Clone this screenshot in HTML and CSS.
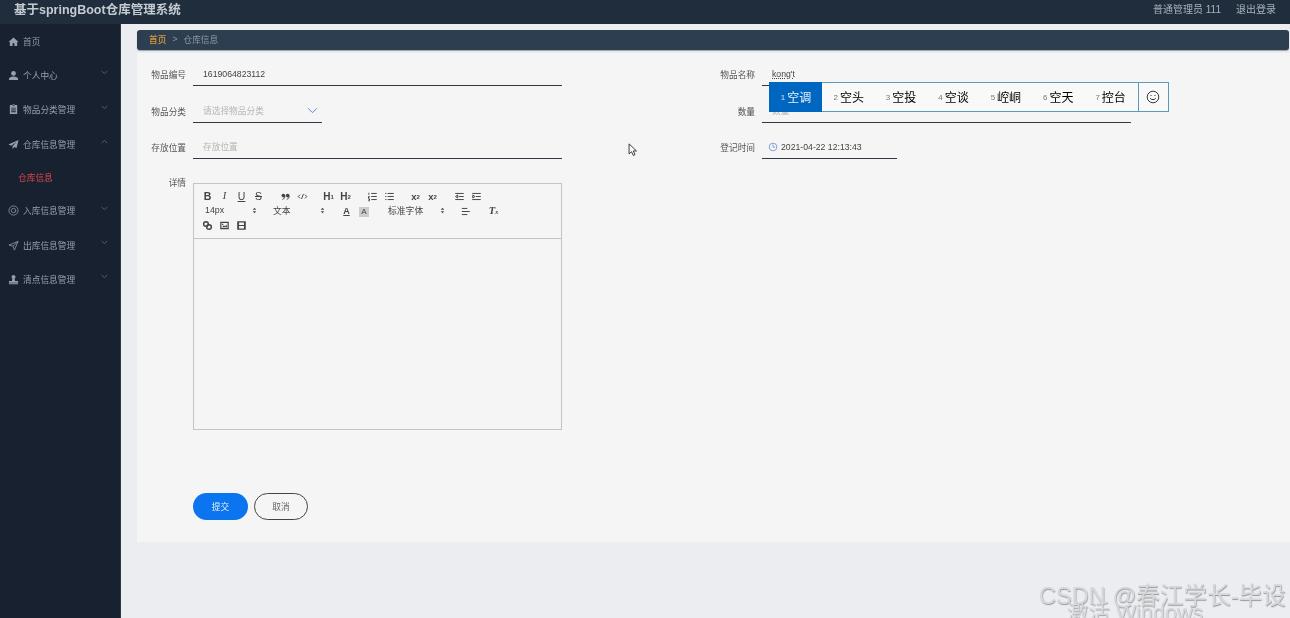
FILE: index.html
```html
<!DOCTYPE html>
<html lang="zh">
<head>
<meta charset="utf-8">
<title>基于springBoot仓库管理系统</title>
<link rel="stylesheet" href="styles.css">
</head>
<body>
<div class="app">
  <header class="topbar">
    <div class="brand">基于springBoot仓库管理系统</div>
    <div class="top-right"><span>普通管理员 111</span><span>退出登录</span></div>
  </header>
  <div class="body-row">
    <aside class="sidebar">
      <div class="nav-item"><svg class="nav-icon" viewBox="0 0 12 12"><path d="M6 1.500 .8 6.200l.6.6L2 6.400V11h3V7.800h2V11h3V6.400l.6.4.6-.6z"/></svg><span>首页</span></div>
      <div class="nav-item"><svg class="nav-icon" viewBox="0 0 12 12"><circle cx="6" cy="3.800" r="2.600"/><path d="M1 10c0-2 2-3 5-3s5 1 5 3v.8H1z"/></svg><span>个人中心</span><svg class="chev" viewBox="0 0 10 6"><path d="M1 1l4 3.500L9 1"/></svg></div>
      <div class="nav-item"><svg class="nav-icon" viewBox="0 0 12 12"><path fill-rule="evenodd" d="M2 1h8v10H2zM5 .2h2V2H5zM3.500 4v1h5V4zm0 2v1h5V6zm0 2v1h5V8z"/></svg><span>物品分类管理</span><svg class="chev" viewBox="0 0 10 6"><path d="M1 1l4 3.500L9 1"/></svg></div>
      <div class="nav-item"><svg class="nav-icon" viewBox="0 0 12 12"><path d="M11.500 1 .5 6l3 1.300L9.500 3 5 8v3l2-2.200 2.300 1z"/></svg><span>仓库信息管理</span><svg class="chev" viewBox="0 0 10 6"><path d="M1 5l4-3.500L9 5"/></svg></div>
      <div class="nav-sub">仓库信息</div>
      <div class="nav-item"><svg class="nav-icon line" viewBox="0 0 12 12"><circle cx="6" cy="6" r="5"/><circle cx="6" cy="6" r="2.400"/><path d="M8.400 6v1.400"/></svg><span>入库信息管理</span><svg class="chev" viewBox="0 0 10 6"><path d="M1 1l4 3.500L9 1"/></svg></div>
      <div class="nav-item"><svg class="nav-icon line" viewBox="0 0 12 12"><path d="M11 1.500 1 5.500l4.500 1.200L7 11zM5.500 6.700 11 1.500"/></svg><span>出库信息管理</span><svg class="chev" viewBox="0 0 10 6"><path d="M1 1l4 3.500L9 1"/></svg></div>
      <div class="nav-item"><svg class="nav-icon" viewBox="0 0 12 12"><circle cx="6" cy="3.200" r="2.200"/><path d="M4.800 5h2.400l.5 2.600H11v2H1v-2h3.300zM1 10.200h10v1H1z"/></svg><span>清点信息管理</span><svg class="chev" viewBox="0 0 10 6"><path d="M1 1l4 3.500L9 1"/></svg></div>
    </aside>
    <main class="content">
      <nav class="crumb"><span class="crumb-home">首页</span><span class="crumb-sep">&gt;</span><span>仓库信息</span></nav>
      <form class="panel">
        <div class="grid">
          <div class="field"><label class="lbl">物品编号</label><input class="inp" value="1619064823112"></div>
          <div class="field"><label class="lbl">物品名称</label><input class="inp ime-text" value="kong't"></div>
          <div class="field"><label class="lbl">物品分类</label><div class="select"><span>请选择物品分类</span><svg viewBox="0 0 12 8"><path d="M1 1.500l5 5 5-5"/></svg></div></div>
          <div class="field"><label class="lbl">数量</label><input class="inp" placeholder="数量"></div>
          <div class="field"><label class="lbl">存放位置</label><input class="inp" placeholder="存放位置"></div>
          <div class="field"><label class="lbl">登记时间</label><div class="date"><svg viewBox="0 0 12 12"><circle cx="6" cy="6" r="4.600"/><path d="M6 3v3.200h2.400"/></svg><span>2021-04-22 12:13:43</span></div></div>
        </div>
        <div class="editor-row">
          <label class="lbl">详情</label>
          <div class="editor">
            <div class="toolbar">
              <div class="tb-row">
                <div class="tb-group">
                  <span class="tb t-b">B</span><span class="tb t-i">I</span><span class="tb t-u">U</span><span class="tb t-s">S</span>
                </div>
                <div class="tb-group">
                  <span class="tb"><svg viewBox="0 0 18 18"><circle class="fill" cx="5.500" cy="7.500" r="3"/><circle class="fill" cx="12.500" cy="7.500" r="3"/><path class="stroke" d="M8 8c0 3-1.500 5-4 6M15 8c0 3-1.500 5-4 6"/></svg></span>
                  <span class="tb"><svg viewBox="0 0 18 18"><path class="stroke" d="M5 6 2 9l3 3M13 6l3 3-3 3M10.500 5l-3 8"/></svg></span>
                </div>
                <div class="tb-group">
                  <span class="tb t-h">H<sub>1</sub></span><span class="tb t-h">H<sub>2</sub></span>
                </div>
                <div class="tb-group">
                  <span class="tb"><svg viewBox="0 0 18 18"><path class="stroke" d="M7 4h9M7 9h9M7 14h9M3 3v3M2 9h2l-2 2.500h2M2 13h2v3H2"/></svg></span>
                  <span class="tb"><svg viewBox="0 0 18 18"><path class="stroke" d="M6 4h10M6 9h10M6 14h10M2 4h2M2 9h2M2 14h2"/></svg></span>
                </div>
                <div class="tb-group">
                  <span class="tb t-x">x<sub>2</sub></span><span class="tb t-x">x<sup>2</sup></span>
                </div>
                <div class="tb-group">
                  <span class="tb"><svg viewBox="0 0 18 18"><path class="stroke" d="M2 4h14M8 9h8M2 14h14M6 6.500 2.500 9 6 11.500z"/></svg></span>
                  <span class="tb"><svg viewBox="0 0 18 18"><path class="stroke" d="M2 4h14M8 9h8M2 14h14M3 6.500 6.500 9 3 11.500z"/></svg></span>
                </div>
              </div>
              <div class="tb-row">
                <div class="picker p-size"><span>14px</span><svg class="updown" viewBox="0 0 6 10"><path d="M3 1 5.500 4h-5zM3 9 .5 6h5z"/></svg></div>
                <div class="picker p-head"><span>文本</span><svg class="updown" viewBox="0 0 6 10"><path d="M3 1 5.500 4h-5zM3 9 .5 6h5z"/></svg></div>
                <div class="tb-group g-color">
                  <span class="tb t-a">A</span>
                  <span class="tb t-abg">A</span>
                </div>
                <div class="picker p-font"><span>标准字体</span><svg class="updown" viewBox="0 0 6 10"><path d="M3 1 5.500 4h-5zM3 9 .5 6h5z"/></svg></div>
                <div class="tb-group g-align"><span class="tb"><svg viewBox="0 0 18 18"><path class="stroke" d="M3 4h9M3 9h13M3 14h9"/></svg></span></div>
                <div class="tb-group g-clean"><span class="tb t-clean">T<sub>x</sub></span></div>
              </div>
              <div class="tb-row tb-last">
                <span class="tb"><svg viewBox="0 0 18 18"><circle class="stroke thick" cx="6.500" cy="6.500" r="3.800"/><circle class="stroke thick" cx="11.500" cy="11.500" r="3.800"/></svg></span>
                <span class="tb"><svg viewBox="0 0 18 18"><path class="fill" fill-rule="evenodd" d="M2 3h14v12H2zM4 5v8h10V5z"/><path class="fill" d="M5 12l3-3.500 2 2 2-3 1.500 4.500zM5 6h2v2H5z"/></svg></span>
                <span class="tb"><svg viewBox="0 0 18 18"><path class="fill" fill-rule="evenodd" d="M2 2h14v14H2zM5 4v4h8V4zM5 10v4h8v-4z"/></svg></span>
              </div>
            </div>
            <div class="editor-body"></div>
          </div>
        </div>
        <div class="actions">
          <button type="button" class="btn btn-primary">提交</button>
          <button type="button" class="btn btn-ghost">取消</button>
        </div>
      </form>
    </main>
  </div>

  <div class="ime">
    <span class="ime-cand on"><i>1</i>空调</span>
    <span class="ime-cand"><i>2</i>空头</span>
    <span class="ime-cand"><i>3</i>空投</span>
    <span class="ime-cand"><i>4</i>空谈</span>
    <span class="ime-cand"><i>5</i>崆峒</span>
    <span class="ime-cand"><i>6</i>空天</span>
    <span class="ime-cand"><i>7</i>控台</span>
    <span class="ime-emoji"><svg viewBox="0 0 14 14"><circle cx="7" cy="7" r="5.800"/><path d="M4.200 8.300c.8 1.700 4.800 1.700 5.600 0M5 5v1M9 5v1"/></svg></span>
  </div>
  <svg class="cursor" viewBox="0 0 11 16"><path d="M1 1v11.500l2.800-2.600 2 4.300 2-.9-2-4.200h3.700z"/></svg>
  <div class="wm-csdn">CSDN @春江学长-毕设</div>
  <div class="wm-win">激活 Windows</div>
</div>
</body>
</html>
```
FILE: styles.css
```css
* { box-sizing: border-box; }
html, body { margin: 0; padding: 0; height: 618px; overflow: hidden; }
body { font-family: "Liberation Sans", "Noto Sans CJK SC", sans-serif; font-size: 8.700px; color: #333; background: #ebedf0; }
.app { position: relative; width: 1290px; height: 618px; overflow: hidden; filter: blur(.4px); }

.topbar { height: 24px; background: #1f2d3d; display: flex; justify-content: space-between; align-items: center; padding: 0 14px 8px; color: #c3c9cf; }
.brand { font-size: 12.500px; font-weight: 700; color: #c5cbd1; }
.top-right { display: flex; gap: 15px; font-size: 10px; color: #aab1b9; }

.body-row { display: flex; height: 594px; }
.sidebar { width: 121px; flex: none; background: #17212f; border-right: 1px solid #2b3a4a; color: #97a0aa; }
.nav-item { height: 34.400px; display: flex; align-items: center; padding-left: 8px; position: relative; }
.nav-icon { width: 11px; height: 11px; fill: #97a0aa; margin-right: 4px; flex: none; }
.nav-icon.line { fill: none; stroke: #8d96a0; stroke-width: .9; }
.chev { position: absolute; left: 101px; top: 12px; width: 7px; height: 5px; fill: none; stroke: #6f7a86; stroke-width: 1; }
.nav-sub { height: 32px; display: flex; align-items: center; padding: 0 0 1px 18px; color: #e0474c; }

.content { flex: 1; padding: 6px 0 0 16px; background: #ebedf0; }
.crumb { height: 20px; width: 1152px; background: #2c3e50; border-radius: 3px; display: flex; align-items: center; gap: 6px; padding: 0 0 2px 12px; color: #8f9aa6; box-shadow: 0 1px 1px #9aa3ad; }
.crumb-home { color: #d99a3a; font-weight: 500; }
.panel { margin-top: 3px; height: 489px; background: #f5f5f5; padding-top: 7px; }
.grid { display: grid; grid-template-columns: 569px 569px; row-gap: 10.500px; }
.field { display: flex; height: 26px; }
.lbl { width: 49px; margin-right: 7px; text-align: right; color: #555; line-height: 30px; flex: none; }
.inp { width: 369px; height: 26px; border: 0; border-bottom: 1px solid #303a45; background: transparent; padding: 3px 0 0 10px; font: inherit; color: #444; outline: 0; }
.inp::placeholder { color: #b5b5b5; }
.ime-text { text-decoration: underline dotted; }
.select { width: 129px; height: 26px; border-bottom: 1px solid #303a45; padding: 2px 4px 0 10px; display: flex; align-items: center; justify-content: space-between; color: #b5b5b5; }
.select svg { width: 11px; height: 7px; fill: none; stroke: #5b85c9; stroke-width: 1.100; }
.date { width: 135px; height: 26px; border-bottom: 1px solid #303a45; padding: 3px 0 0 6px; display: flex; align-items: center; gap: 3px; color: #444; }
.date svg { width: 10px; height: 10px; fill: none; stroke: #5b85c9; stroke-width: .9; }

.editor-row { display: flex; margin-top: 24px; }
.editor-row .lbl { line-height: 1; margin-top: -4px; }
.editor { width: 369px; height: 247px; border: 1px solid #c4c4c4; display: flex; flex-direction: column; }
.toolbar { height: 55px; border-bottom: 1px solid #c4c4c4; padding: 5px 0 0 5px; }
.tb-row { display: flex; height: 15px; align-items: center; }
.tb-last { margin-top: -1px; }
.tb-group { display: flex; align-items: center; margin-right: 9.500px; }
.tb { width: 17px; height: 15px; display: flex; align-items: center; justify-content: center; color: #444; font-size: 10.500px; line-height: 1; flex: none; }
.tb svg { width: 11px; height: 11px; }
.tb sub, .tb sup { font-size: 6px; line-height: 0; }
.fill { fill: #444; }
.stroke { fill: none; stroke: #444; stroke-width: 1.600; }
.stroke.thick { stroke-width: 2.400; }
.t-b { font-weight: 700; }
.t-i { font-family: "Liberation Serif", serif; font-style: italic; }
.t-u { text-decoration: underline; }
.t-s { text-decoration: line-through; }
.t-h { font-weight: 700; font-size: 10px; }
.t-x { font-weight: 700; font-size: 9.500px; }
.picker { height: 15px; display: flex; align-items: center; justify-content: space-between; padding: 0 3px 3px 6px; color: #444; font-size: 8.800px; flex: none; }
.updown { width: 5px; height: 7px; fill: #444; }
.p-size { width: 61px; margin-right: 7px; }
.p-head { width: 61px; margin-right: 10px; }
.p-font { width: 66px; margin-right: 9px; }
.g-color { margin-right: 13px; }
.g-align { margin-right: 11px; }
.t-a { font-size: 9px; text-decoration: underline; font-weight: 700; }
.t-abg { font-size: 8px; background: #ccc; width: 10px; height: 10px; margin-left: 4px; }
.t-clean { font-family: "Liberation Serif", serif; font-style: italic; font-weight: 700; }
.editor-body { flex: 1; }

.actions { display: flex; gap: 6px; margin: 63px 0 0 56px; }
.btn { width: 55px; height: 27px; border-radius: 14px; font: inherit; padding: 0; }
.btn-primary { background: #0a75ee; border: 0; color: #e8f1fc; }
.btn-ghost { width: 54px; background: #f5f5f5; border: 1px solid #444; color: #666; }

.ime { position: absolute; left: 769px; top: 82px; width: 399.500px; height: 30px; display: flex; background: #f9f9f9; border: 1px solid #5b9bb8; color: #000; font-size: 12px; }
.ime-cand { width: 52.400px; height: 28px; display: flex; align-items: center; justify-content: center; gap: 2px; padding: 0 0 2px 1px; }
.ime-cand i { font-style: normal; font-size: 8px; color: #777; padding-top: 2px; }
.ime-cand.on { background: #0067c0; color: #e8f1fc; margin: -1px 0 -1px -1px; height: 30px; width: 53px; }
.ime-cand.on i { color: #cfe0f2; }
.ime-emoji { position: absolute; right: 0; top: 0; width: 29.500px; height: 28px; border-left: 1px solid #5b9bb8; display: flex; align-items: center; justify-content: center; }
.ime-emoji svg { width: 14px; height: 14px; fill: none; stroke: #222; stroke-width: .9; }

.cursor { position: absolute; left: 628px; top: 143px; width: 10px; height: 14px; fill: #fff; stroke: #222; stroke-width: 1; }
.wm-csdn { position: absolute; left: 1039px; top: 581px; font-size: 23.600px; line-height: 30px; white-space: nowrap; color: #d6d8da; text-shadow: .5px .5px 1px #94979b; }
.wm-win { position: absolute; left: 1067px; top: 600px; font-size: 21.500px; line-height: 26px; white-space: nowrap; color: #d6d8da; text-shadow: .5px .5px 1px #a0a3a7; }
```
